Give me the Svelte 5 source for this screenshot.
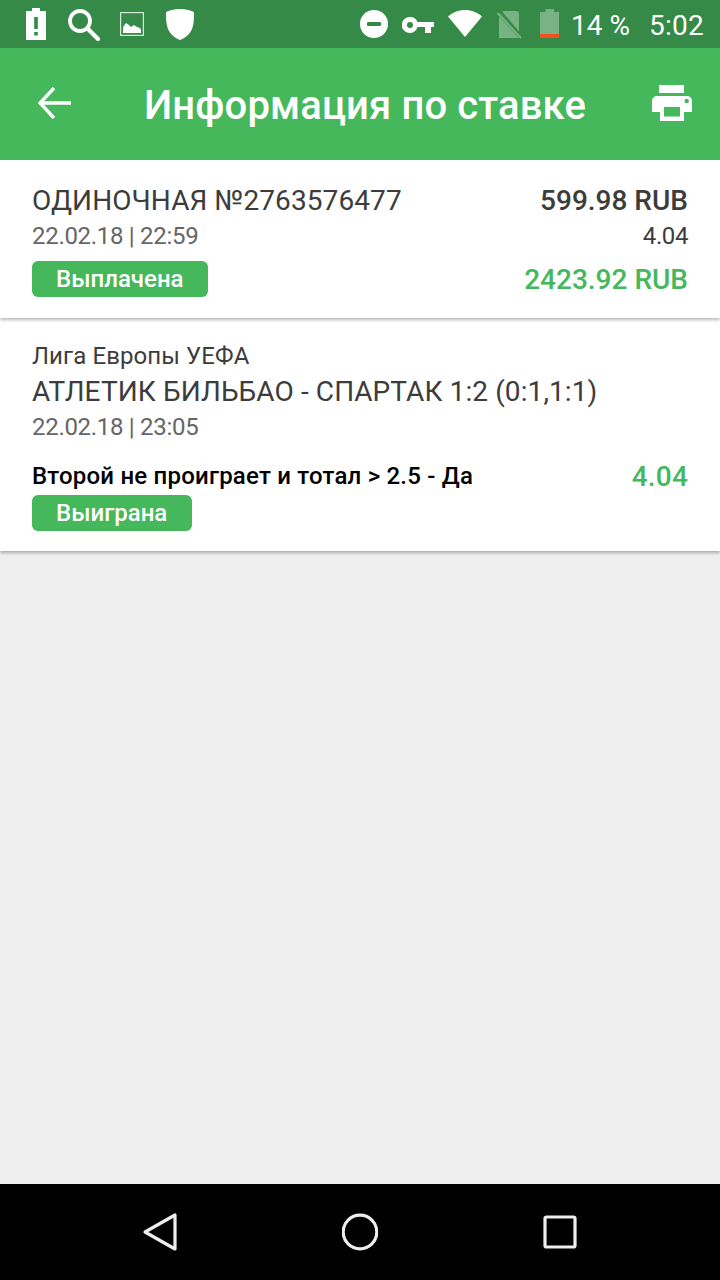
<script>
  const bets = { type: 'ОДИНОЧНАЯ №2763576477' };
</script>

<div class="page">
  <header class="status">
    <div class="left">
      <svg class="i-batt" viewBox="0 0 20 32"><path fill="#fff" d="M6 0h8v3h6v29H0V3h6z"/><path fill="#348a46" d="M8.200 9h3.600v12H8.200zM8.200 24h3.600v3.600H8.200z"/></svg>
      <svg class="i-search" viewBox="0 0 32 32"><circle cx="12" cy="12" r="10" fill="none" stroke="#fff" stroke-width="3.800"/><path d="M20 20l10 10" stroke="#fff" stroke-width="4.200" stroke-linecap="round"/></svg>
      <svg class="i-img" viewBox="0 0 24 24"><rect x=".6" y=".6" width="22.800" height="22.800" fill="none" stroke="#fff" stroke-opacity=".8" stroke-width="1.200"/><path fill="#fff" d="M3 21v-6l3-4 3 2 2 2 3-2 3 2h1l3 2v4z"/></svg>
      <svg class="i-shield" viewBox="0 0 28 31"><path fill="#fff" d="M14 0c5 0 10 1 14 3 0 6 0 12-2 17-2 5-7 9-12 11C9 29 4 25 2 20 0 15 0 9 0 3c4-2 9-3 14-3z"/></svg>
    </div>
    <div class="right">
      <svg class="i-dnd" viewBox="0 0 28 28"><circle cx="14" cy="14" r="14" fill="#fff"/><rect x="7" y="12" width="14" height="4" rx="1" fill="#348a46"/></svg>
      <svg class="i-key" viewBox="0 0 32 16"><path fill="#fff" d="M8 0a8 8 0 0 1 7.500 5H32v5h-3v6h-6v-6h-7.500A8 8 0 1 1 8 0z"/><circle cx="8" cy="8" r="3" fill="#348a46"/></svg>
      <svg class="i-wifi" viewBox="0 0 34 27"><path fill="#fff" d="M17 27L0 6.500C4.500 2.500 10.500 0 17 0s12.500 2.500 17 6.500z"/></svg>
      <svg class="i-sim" viewBox="0 0 26 28"><path fill="#fff" fill-opacity=".34" d="M7 0h13a3 3 0 0 1 3 3v24H3V4z"/><path d="M4 0l23 27" stroke="#348a46" stroke-width="2.400"/><path d="M1.500 2l23.500 25" stroke="#348a46" stroke-width="2.800"/><path d="M1.500 2l23.500 25" stroke="#fff" stroke-opacity=".34" stroke-width="2"/></svg>
      <svg class="i-batt2" viewBox="0 0 19 29"><path fill="#fff" fill-opacity=".34" d="M5.500 0h8.500v3H19v22H0V3h5.500z"/><rect y="25" width="19" height="4" fill="#f4511e"/></svg>
      <span class="pct">14 %</span>
      <span class="clock">5:02</span>
    </div>
  </header>

  <div class="toolbar">
    <svg class="back" viewBox="0 0 34 32"><path d="M33 16H3M16 1L2 16l14 15" fill="none" stroke="#fff" stroke-width="3.400"/></svg>
    <h1>Информация по ставке</h1>
    <svg class="print" viewBox="0 0 40 36"><path fill="#fff" d="M7 0h25v8H7zM5 11h30a5 5 0 0 1 5 5v11h-8v9H8v-9H0V16a5 5 0 0 1 5-5z"/><rect x="12" y="22" width="16" height="9.500" fill="#45b85c"/><circle cx="34.700" cy="16" r="2.200" fill="#45b85c"/></svg>
  </div>

  <main class="content">
    <section class="card head">
      <div class="row">
        <span class="title">{bets.type}</span>
        <strong class="sum">599.98 RUB</strong>
      </div>
      <div class="row second">
        <span class="date">22.02.18 | 22:59</span>
        <span class="coef">4.04</span>
      </div>
      <div class="row third">
        <span class="badge paid">Выплачена</span>
        <strong class="win">2423.92 RUB</strong>
      </div>
    </section>

    <section class="card event">
      <div class="league">Лига Европы УЕФА</div>
      <div class="title match">АТЛЕТИК БИЛЬБАО - СПАРТАК 1:2 (0:1,1:1)</div>
      <div class="date edate">22.02.18 | 23:05</div>
      <div class="row pick">
        <strong class="pick-name">Второй не проиграет и тотал &gt; 2.5 - Да</strong>
        <strong class="pick-coef">4.04</strong>
      </div>
      <span class="badge won">Выиграна</span>
    </section>
  </main>

  <nav class="navbar">
    <svg class="n" viewBox="0 0 36 40"><path d="M3 20L33 3v34z" fill="none" stroke="#eee" stroke-width="3.200" stroke-linejoin="round"/></svg>
    <svg class="n" viewBox="0 0 36 40"><circle cx="18" cy="20" r="16.800" fill="none" stroke="#eee" stroke-width="3.200"/></svg>
    <svg class="n" viewBox="0 0 36 40"><rect x="3" y="5" width="30" height="30" rx="1.500" fill="none" stroke="#eee" stroke-width="3.200"/></svg>
  </nav>
</div>

<style>
  :global(body) { margin: 0; }
  .page {
    width: 720px; height: 1280px; display: flex; flex-direction: column;
    background: #efefef; font-family: Roboto, sans-serif; overflow: hidden;
  }
  svg { display: block; flex: none; }
  .status {
    height: 48px; background: #348a46; display: flex; justify-content: space-between;
    align-items: flex-start; padding: 0 16px 0 26px; box-sizing: border-box; flex: none;
  }
  .left, .right { display: flex; align-items: flex-start; }
  .i-batt { width: 20px; height: 32px; margin-top: 8px; }
  .i-search { width: 32px; height: 32px; margin: 9px 0 0 22px; }
  .i-img { width: 24px; height: 24px; margin: 12px 0 0 20px; }
  .i-shield { width: 28px; height: 31px; margin: 9px 0 0 22px; }
  .i-dnd { width: 28px; height: 28px; margin-top: 10px; }
  .i-key { width: 32px; height: 16px; margin: 17px 0 0 14px; }
  .i-wifi { width: 34px; height: 27px; margin: 10px 0 0 14px; }
  .i-sim { width: 26px; height: 28px; margin: 11px 0 0 14px; }
  .i-batt2 { width: 19px; height: 29px; margin: 9px 0 0 18px; }
  .pct, .clock { color: #fff; font-size: 28px; line-height: 32px; margin-top: 10px; }
  .pct { margin-left: 12px; }
  .clock { margin-left: 19px; letter-spacing: .25px; }

  .toolbar {
    height: 112px; background: #45b85c; display: flex; align-items: center;
    padding: 0 28px 0 38px; box-sizing: border-box; flex: none;
  }
  .back { width: 34px; height: 32px; margin-top: -2px; }
  h1 {
    margin: 4px 0 0 72px; flex: 1; color: #fff; font-size: 40px; font-weight: 500; line-height: 44px;
    white-space: nowrap; letter-spacing: .13px;
  }
  .print { width: 40px; height: 36px; margin-top: -2px; }

  .content { flex: 1; min-height: 0; }
  .card {
    background: #fff; padding: 0 32px; box-shadow: 0 2px 3px rgba(0,0,0,.28);
  }
  .head { position: relative; z-index: 1; height: 158px; padding-top: 24px; box-sizing: border-box; }
  .event { height: 233px; padding-top: 23px; box-sizing: border-box; }
  .row { display: flex; justify-content: space-between; align-items: flex-start; }
  .title { color: #3c3c3c; font-size: 28px; line-height: 34px; display: block; white-space: nowrap; letter-spacing: .1px; }
  .sum { color: #3c3c3c; font-size: 28px; font-weight: 500; line-height: 34px; }
  .second { margin-top: 2px; }
  .date { color: #666; font-size: 24px; line-height: 32px; display: block; letter-spacing: -.3px; }
  .coef { color: #3c3c3c; font-size: 24px; line-height: 32px; letter-spacing: -.4px; }
  .third { margin-top: 9px; }
  .badge {
    display: block; box-sizing: border-box; height: 36px; background: #45b85c; color: #fff;
    border-radius: 6px; font-size: 24px; font-weight: 500; line-height: 36px; padding-left: 24px;
  }
  .paid { width: 176px; }
  .won { width: 160px; margin-top: 2px; }
  .win { color: #45b85c; font-size: 28px; font-weight: 500; line-height: 34px; margin-top: 2px; }
  .league { color: #3c3c3c; font-size: 24px; line-height: 30px; margin-top: 0; letter-spacing: .1px; }
  .match { margin-top: 4px; }
  .edate { margin-top: 2px; }
  .pick { margin-top: 16px; height: 34px; align-items: center; }
  .pick-name { color: #000; font-size: 24px; font-weight: 500; line-height: 34px; letter-spacing: .2px; }
  .pick-coef { color: #45b85c; font-size: 28px; font-weight: 500; line-height: 34px; letter-spacing: .2px; margin-top: 1px; }

  .navbar {
    height: 96px; background: #000; flex: none; display: flex; justify-content: space-between;
    padding: 0 142px; box-sizing: border-box; align-items: center;
  }
  .n { width: 36px; height: 40px; }
</style>
